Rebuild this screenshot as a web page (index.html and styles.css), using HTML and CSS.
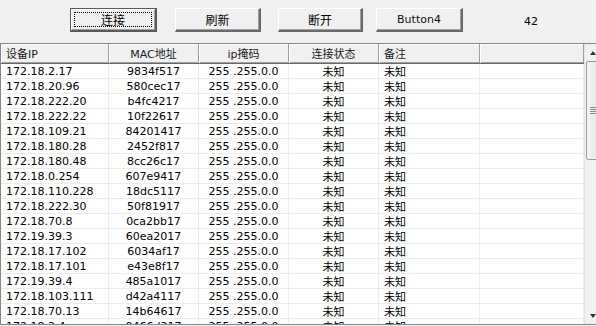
FILE: index.html
```html
<!DOCTYPE html>
<html lang="zh-CN">
<head>
    <meta charset="UTF-8">
    <title>设备列表</title>
    <link rel="stylesheet" href="styles.css">
</head>
<body>

    <div class="toolbar">
        <button class="btn btn-default"><span class="focus-rect">连接</span></button>
        <button class="btn btn-refresh">刷新</button>
        <button class="btn btn-disconnect">断开</button>
        <button class="btn btn-four">Button4</button>
        <span class="count-label">42</span>
    </div>

    <div class="listview">
        <div class="list-main">
            <div class="lv-row lv-header">
                <div class="col-left">设备IP</div>
                <div>MAC地址</div>
                <div>ip掩码</div>
                <div>连接状态</div>
                <div class="col-left">备注</div>
                <div></div>
            </div>
            <div class="lv-body">
                <div class="lv-row"><div class="col-left">172.18.2.17</div><div>9834f517</div><div>255 .255.0.0</div><div>未知</div><div class="col-left">未知</div><div></div></div>
                <div class="lv-row"><div class="col-left">172.18.20.96</div><div>580cec17</div><div>255 .255.0.0</div><div>未知</div><div class="col-left">未知</div><div></div></div>
                <div class="lv-row"><div class="col-left">172.18.222.20</div><div>b4fc4217</div><div>255 .255.0.0</div><div>未知</div><div class="col-left">未知</div><div></div></div>
                <div class="lv-row"><div class="col-left">172.18.222.22</div><div>10f22617</div><div>255 .255.0.0</div><div>未知</div><div class="col-left">未知</div><div></div></div>
                <div class="lv-row"><div class="col-left">172.18.109.21</div><div>84201417</div><div>255 .255.0.0</div><div>未知</div><div class="col-left">未知</div><div></div></div>
                <div class="lv-row"><div class="col-left">172.18.180.28</div><div>2452f817</div><div>255 .255.0.0</div><div>未知</div><div class="col-left">未知</div><div></div></div>
                <div class="lv-row"><div class="col-left">172.18.180.48</div><div>8cc26c17</div><div>255 .255.0.0</div><div>未知</div><div class="col-left">未知</div><div></div></div>
                <div class="lv-row"><div class="col-left">172.18.0.254</div><div>607e9417</div><div>255 .255.0.0</div><div>未知</div><div class="col-left">未知</div><div></div></div>
                <div class="lv-row"><div class="col-left">172.18.110.228</div><div>18dc5117</div><div>255 .255.0.0</div><div>未知</div><div class="col-left">未知</div><div></div></div>
                <div class="lv-row"><div class="col-left">172.18.222.30</div><div>50f81917</div><div>255 .255.0.0</div><div>未知</div><div class="col-left">未知</div><div></div></div>
                <div class="lv-row"><div class="col-left">172.18.70.8</div><div>0ca2bb17</div><div>255 .255.0.0</div><div>未知</div><div class="col-left">未知</div><div></div></div>
                <div class="lv-row"><div class="col-left">172.19.39.3</div><div>60ea2017</div><div>255 .255.0.0</div><div>未知</div><div class="col-left">未知</div><div></div></div>
                <div class="lv-row"><div class="col-left">172.18.17.102</div><div>6034af17</div><div>255 .255.0.0</div><div>未知</div><div class="col-left">未知</div><div></div></div>
                <div class="lv-row"><div class="col-left">172.18.17.101</div><div>e43e8f17</div><div>255 .255.0.0</div><div>未知</div><div class="col-left">未知</div><div></div></div>
                <div class="lv-row"><div class="col-left">172.19.39.4</div><div>485a1017</div><div>255 .255.0.0</div><div>未知</div><div class="col-left">未知</div><div></div></div>
                <div class="lv-row"><div class="col-left">172.18.103.111</div><div>d42a4117</div><div>255 .255.0.0</div><div>未知</div><div class="col-left">未知</div><div></div></div>
                <div class="lv-row"><div class="col-left">172.18.70.13</div><div>14b64617</div><div>255 .255.0.0</div><div>未知</div><div class="col-left">未知</div><div></div></div>
                <div class="lv-row"><div class="col-left">172.18.3.4</div><div>0466d317</div><div>255 .255.0.0</div><div>未知</div><div class="col-left">未知</div><div></div></div>
            </div>
        </div>

        <!-- vertical scrollbar -->
        <div class="vscroll">
            <div class="sb-btn sb-up"></div>
            <div class="sb-track">
                <div class="sb-thumb"><span class="sb-grip"></span></div>
            </div>
            <div class="sb-btn sb-down"></div>
        </div>
    </div>

</body>
</html>
```

FILE: styles.css
```css
/* Basic Reset */
* {
    margin: 0;
    padding: 0;
    box-sizing: border-box;
}

body {
    font-family: 'DejaVu Sans', 'Noto Sans CJK SC', sans-serif;
    font-size: 11px;
    color: #000;
    background-color: #f0f0f0; /* classic form colour */
    width: 596px;
    height: 326px;
    overflow: hidden;
}

/* Top button bar */
.toolbar {
    height: 43px;
    display: flex;
    align-items: flex-start;
    padding: 8px 0 0 70px;
}

.btn {
    height: 24px;
    width: 87px;
    font-family: inherit;
    font-size: 12px;
    color: #000;
    background-color: #f0f0f0;
    border-style: solid;
    border-width: 1px 2px 2px 1px;
    border-color: #ffffff #696969 #696969 #ffffff;
    box-shadow: inset -1px -1px 0 #a0a0a0;
    display: flex;
    align-items: center;
    justify-content: center;
}

.btn-four {
    font-size: 11px;
    color: #111;
    margin-left: 13px;
}

.btn-refresh {
    margin-left: 18px;
    width: 86px;
}

.btn-disconnect {
    margin-left: 17px;
    width: 85px;
}

/* Default button: dark frame + dotted focus rectangle */
.btn-default {
    border: 1px solid #5a5a5a;
    border-right-width: 2px;
    border-bottom-width: 2px;
    box-shadow: inset 1px 1px 0 #ffffff, inset -1px -1px 0 #a0a0a0;
    padding: 3px;
}

.focus-rect {
    display: flex;
    align-items: center;
    justify-content: center;
    width: 100%;
    height: 100%;
    border: 1px dotted #000;
}

.count-label {
    margin: 7px 0 0 61px;
    font-size: 11px;
}

/* List view */
.listview {
    display: flex;
    width: 602px;
    height: 282px;
    border: 1px solid #828790;
    background-color: #ffffff;
}

.list-main {
    flex: 1;
    display: flex;
    flex-direction: column;
    overflow: hidden;
}

.lv-row {
    display: grid;
    grid-template-columns: 108px 90px 90px 90px 101px 1fr;
    height: 15px;
    flex-shrink: 0;
    border-bottom: 1px solid #ececec;
}

.lv-row > div {
    display: flex;
    align-items: center;
    justify-content: center;
    white-space: nowrap;
    overflow: hidden;
    border-right: 1px solid #ececec;
}

.lv-row > .col-left {
    justify-content: flex-start;
    padding-left: 5px;
}

/* Header row */
.lv-header {
    height: 20px;
    background-color: #f0f0f0;
    border-bottom: 1px solid #696969;
    box-shadow: inset 0 -1px 0 #a0a0a0;
    color: #1a1a1a;
}

.lv-header > div {
    border-right: 1px solid #a0a0a0;
    box-shadow: inset 1px 1px 0 #ffffff;
    padding-bottom: 1px;
}

.lv-body {
    flex: 1;
    overflow: hidden;
}

/* Vertical scrollbar */
.vscroll {
    width: 17px;
    display: flex;
    flex-direction: column;
    background-color: #f0f0f0;
    border-left: 1px solid #e4e4e4;
}

.sb-btn {
    height: 17px;
    display: flex;
    align-items: center;
    justify-content: center;
}

.sb-up::before,
.sb-down::before {
    content: '';
    border-left: 3px solid transparent;
    border-right: 3px solid transparent;
}

.sb-up::before {
    border-bottom: 4px solid #333;
}

.sb-down::before {
    border-top: 4px solid #333;
}

.sb-track {
    flex: 1;
    padding: 0 1px;
}

.sb-thumb {
    height: 99px;
    border: 1px solid #9c9c9c;
    border-radius: 2px;
    background: linear-gradient(to right, #f4f4f4, #e4e4e4);
    display: flex;
    align-items: center;
    justify-content: center;
}

.sb-grip {
    width: 7px;
    height: 7px;
    background: repeating-linear-gradient(to bottom, #8a8a8a 0 1px, transparent 1px 2px);
}
```
